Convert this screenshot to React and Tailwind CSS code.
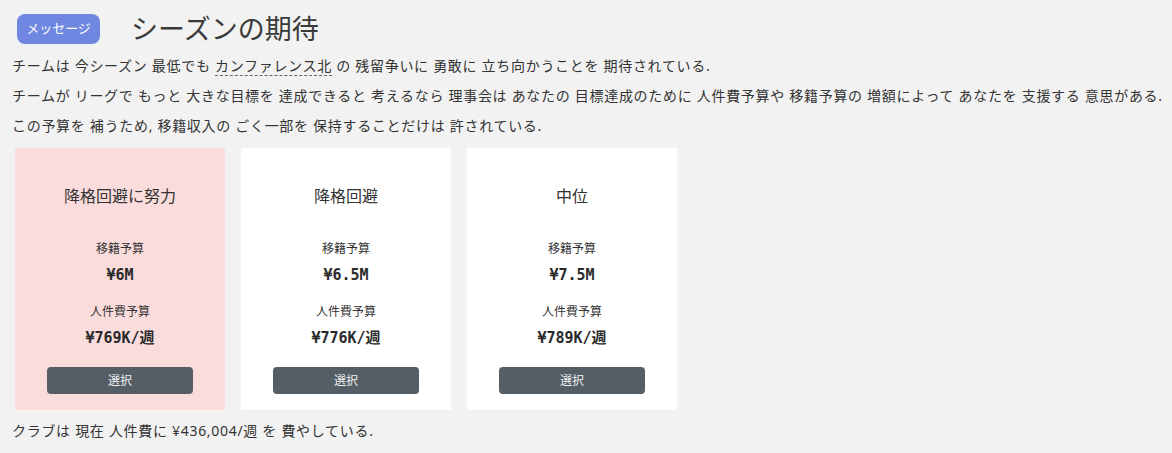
import React from "react";

const font = { fontFamily: '"Noto Sans", "Noto Sans CJK JP", sans-serif' };

function Card({ title, transfer, wage, pink }) {
  return (
    <div
      className={`w-[210px] h-[262px] flex flex-col items-center pt-[36px] ${pink ? "bg-[#fadcdc]" : "bg-white"}`}
    >
      <div className="text-[16px] leading-[24px] text-[#333]">{title}</div>
      <div className="mt-[32px] text-[12px] leading-[18px] text-[#333]">移籍予算</div>
      <div className="mt-[6px] text-[15px] leading-[22px] font-bold text-[#2a2a2a] font-['DejaVu_Sans_Mono','Noto_Sans_CJK_JP',monospace]">
        {transfer}
      </div>
      <div className="mt-[17px] text-[12px] leading-[18px] text-[#333]">人件費予算</div>
      <div className="mt-[5px] text-[15px] leading-[24px] font-bold text-[#2a2a2a] font-['DejaVu_Sans_Mono','Noto_Sans_CJK_JP',monospace]">
        {wage}
      </div>
      <button className="mt-[17px] w-[146px] h-[27px] rounded-[4px] bg-[#565e65] text-[12px] text-[#eef0f2] flex items-center justify-center">
        選択
      </button>
    </div>
  );
}

export default function App() {
  return (
    <div className="w-[1172px] h-[453px] bg-[#f2f2f2] overflow-hidden" style={font}>
      <div className="flex items-center pt-[14px] pl-[17px]">
        <div className="w-[83px] h-[30px] rounded-[8px] bg-[#6f87e0] text-white text-[13px] flex items-center justify-center">
          メッセージ
        </div>
        <div className="ml-[31px] text-[27px] leading-[30px] font-normal text-[#3a3a3a]">シーズンの期待</div>
      </div>
      <div className="pl-[12px] mt-[7px] text-[14px] leading-[30px] tracking-[0.7px] text-[#333]">
        <div>
          チームは 今シーズン 最低でも{" "}
          <span className="border-b border-dashed border-[#666]">カンファレンス北</span> の 残留争いに 勇敢に 立ち向かうことを 期待されている.
        </div>
        <div>
          チームが リーグで もっと 大きな目標を 達成できると 考えるなら 理事会は あなたの 目標達成のために 人件費予算や 移籍予算の 増額によって あなたを 支援する 意思がある.
        </div>
        <div>この予算を 補うため, 移籍収入の ごく一部を 保持することだけは 許されている.</div>
      </div>
      <div className="flex gap-[16px] ml-[15px] mt-[7px]">
        <Card title="降格回避に努力" transfer="¥6M" wage="¥769K/週" pink />
        <Card title="降格回避" transfer="¥6.5M" wage="¥776K/週" />
        <Card title="中位" transfer="¥7.5M" wage="¥789K/週" />
      </div>
      <div className="pl-[12px] mt-[6px] text-[14px] leading-[30px] tracking-[0.7px] text-[#333]">
        クラブは 現在 人件費に ¥436,004/週 を 費やしている.
      </div>
    </div>
  );
}
